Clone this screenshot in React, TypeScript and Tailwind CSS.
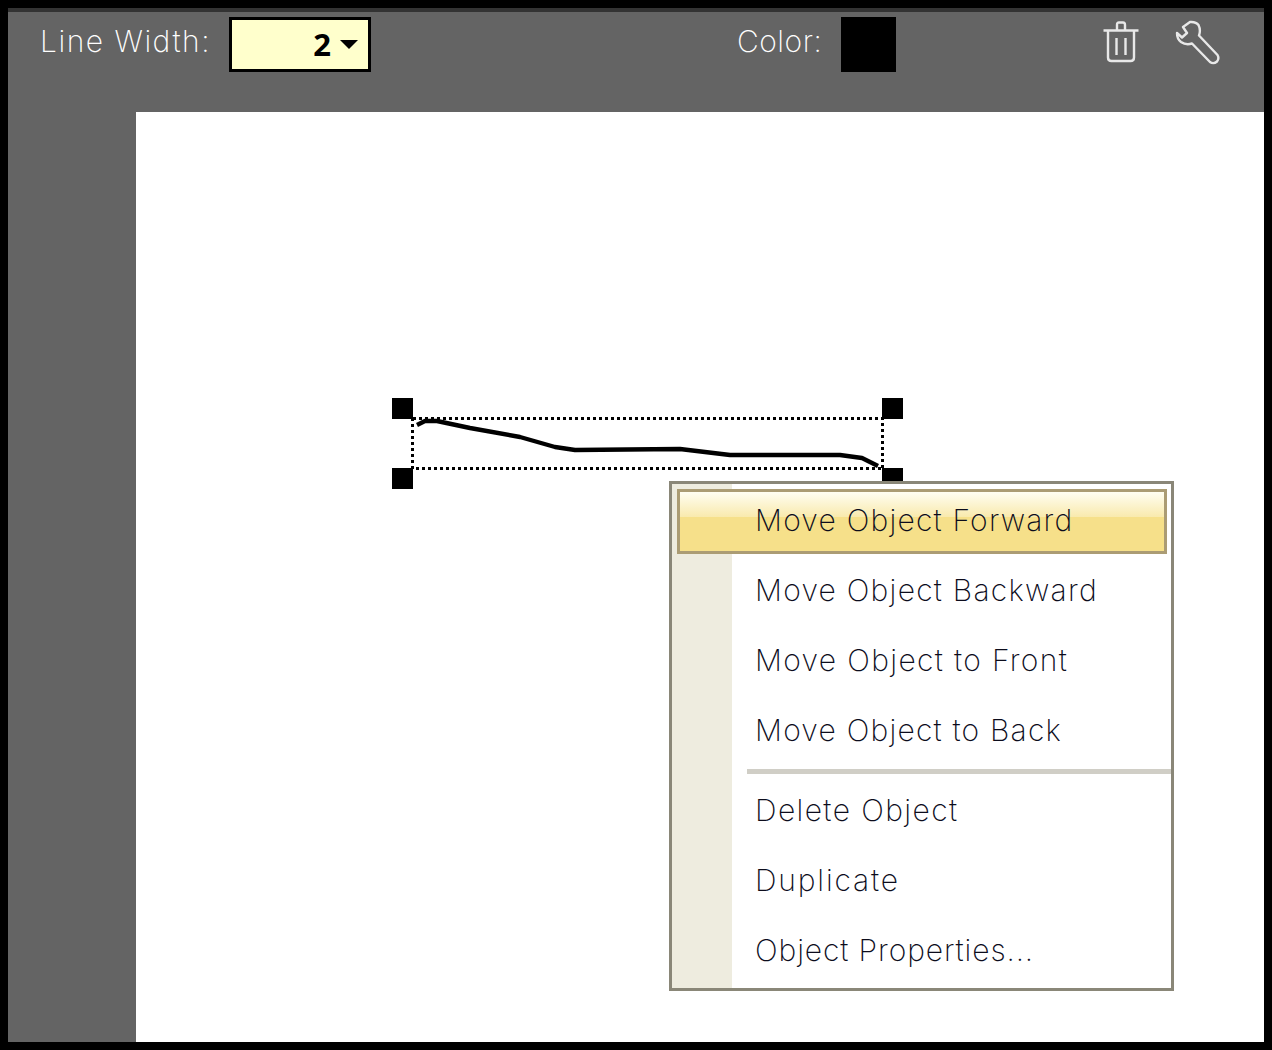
const ITEM = "h-[70px] pl-[83px] pb-[2px] flex items-center text-[30px] font-extralight text-[#0c0c1c] whitespace-nowrap";
const MONT = "font-['Inter','Liberation_Sans',sans-serif]";

function Trash() {
  return (
    <svg width="36" height="44" viewBox="0 0 36 44" fill="none" stroke="#e8e8e8" strokeWidth="2.4" className="mt-[8px]">
      <path d="M0.5 10.5H35.5" />
      <path d="M14 10V5Q14 2.5 16 2.5H20Q22 2.5 22 5V10" />
      <path d="M5 11V37.5Q5 41 8.5 41H27.5Q31 41 31 37.5V11" />
      <path d="M13.5 18V35M22.5 18V35" />
    </svg>
  );
}

function Wrench() {
  return (
    <svg width="46" height="46" viewBox="0 0 46 46" fill="none" stroke="#e8e8e8" strokeWidth="2.4" strokeLinejoin="round" className="mt-[7px] -ml-[1px]">
      <path d="M9 8L16 3Q22 2.5 24.5 6Q27 11 25 16.5L43.5 36Q45.5 39.5 43 42.5Q39.5 45.5 36 43L18 24.5Q12 26.5 7 23Q3 20 3 14L8 18.5L13 14Z" />
    </svg>
  );
}

export default function App() {
  return (
    <div className={`w-[1272px] h-[1050px] bg-black p-[8px] overflow-hidden ${MONT}`}>
      <div className="h-full flex flex-col bg-[#646464] border-t-4 border-[#333333]">
        <div className="h-[100px] shrink-0 flex items-start pl-[32px]">
          <span className="w-[189px] mt-[7px] text-[30px] leading-[44px] font-extralight tracking-[1.5px] text-white whitespace-nowrap">Line Width:</span>
          <div className="w-[142px] h-[55px] mt-[5px] bg-[#ffffcc] border-[3px] border-black flex items-center justify-end pr-[10px] gap-[9px]">
            <span className="text-[31px] font-bold text-black font-['Open_Sans',sans-serif] leading-none">2</span>
            <span className="w-0 h-0 border-x-[9px] border-x-transparent border-t-[9px] border-t-black" />
          </div>
          <span className="ml-[366px] w-[104px] mt-[7px] text-[30px] leading-[44px] font-extralight tracking-[0.5px] text-white whitespace-nowrap">Color:</span>
          <div className="w-[55px] h-[55px] mt-[5px] bg-black" />
          <div className="ml-[207px]"><Trash /></div>
          <div className="ml-[36px]"><Wrench /></div>
        </div>
        <div className="flex-1 flex">
          <div className="w-[128px] shrink-0" />
          <div className="flex-1 bg-white relative">
            <svg className="absolute left-[270px] top-[300px]" width="490" height="70" viewBox="270 300 490 70" fill="none">
              <rect x="276.5" y="306.5" width="470" height="50" stroke="black" strokeWidth="3" strokeDasharray="3 3" shapeRendering="crispEdges" />
            </svg>
            <svg className="absolute left-[270px] top-[300px] blur-[0.5px]" width="490" height="70" viewBox="270 300 490 70" fill="none">
              <path d="M281 313L289 309L301 309L334 316L384 325L419 335L439 338L544 337L594 343L704 343L726 346L742 354" stroke="black" strokeWidth="4.4" strokeLinejoin="round" />
            </svg>
            <div className="absolute left-[256px] top-[286px] w-[21px] h-[21px] bg-black" />
            <div className="absolute left-[746px] top-[286px] w-[21px] h-[21px] bg-black" />
            <div className="absolute left-[256px] top-[356px] w-[21px] h-[21px] bg-black" />
            <div className="absolute left-[746px] top-[356px] w-[21px] h-[21px] bg-black" />
            <div className="absolute left-[533px] top-[369px] w-[505px] h-[510px] bg-white border-[3px] border-[#8a8778] py-[2px]">
              <div className="absolute left-0 top-0 bottom-0 w-[60px] bg-[#eeecdf]" />
              <div className="relative">
                <div className="h-[70px] pt-[3px] pb-[2px] pl-[5px] pr-[4px]">
                  <div className="h-full border-[3px] border-[#ab9c74] bg-[linear-gradient(to_bottom,#fffef2_0%,#f9eaae_42%,#f6e08a_42%,#f6e08a_100%)] flex items-center pl-[75px] pb-[2px] text-[30px] font-extralight text-[#0c0c1c] tracking-[1.22px] whitespace-nowrap">Move Object Forward</div>
                </div>
                <div className={`${ITEM} tracking-[1.25px]`}>Move Object Backward</div>
                <div className={`${ITEM} tracking-[1.35px]`}>Move Object to Front</div>
                <div className={`${ITEM} tracking-[1.22px]`}>Move Object to Back</div>
                <div className="h-[10px] pt-[3px] pl-[75px]"><div className="h-[5px] bg-[#d0cec6]" /></div>
                <div className={`${ITEM} tracking-[1.4px]`}>Delete Object</div>
                <div className={`${ITEM} tracking-[1.85px]`}>Duplicate</div>
                <div className={`${ITEM} tracking-[0.9px]`}>Object Properties...</div>
              </div>
            </div>
          </div>
        </div>
      </div>
    </div>
  );
}
